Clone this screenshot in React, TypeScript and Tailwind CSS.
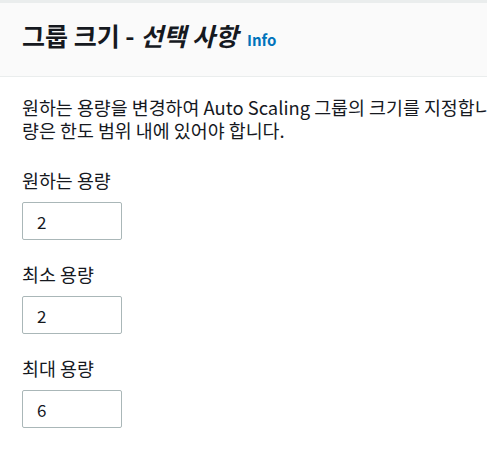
import React from 'react';

const font = { fontFamily: '"Noto Sans CJK KR", "Noto Sans", Arial, sans-serif' };

const Field: React.FC<{ label: string; value: string }> = ({ label, value }) => (
  <div className="flex flex-col">
    <label className="text-[18.4px] leading-[24px] text-[#16191f] mb-[10px]">{label}</label>
    <input
      readOnly
      value={value}
      className="w-[100px] h-[38px] border border-[#aab7b8] rounded-[2px] bg-white px-[14px] text-[17px] text-[#16191f] outline-none"
    />
  </div>
);

const App: React.FC = () => {
  return (
    <div className="w-[487px] h-[449px] bg-white overflow-hidden" style={font}>
      <div className="border-t-[3px] border-b border-[#eaeded] bg-[#fafafa] h-[77px] flex items-center px-[22px]">
        <h2 className="text-[25px] leading-[30px] font-bold text-[#16191f] whitespace-nowrap -mt-[4px]">
          그룹 크기 - <i>선택 사항</i>
          <a href="#" className="ml-[9px] text-[15px] font-bold text-[#0073bb]">Info</a>
        </h2>
      </div>
      <div className="px-[22px] pt-[19px]">
        <p className="text-[18.4px] leading-[23px] text-[#16191f] whitespace-nowrap">
          <span className="block">원하는 용량을 변경하여 Auto Scaling 그룹의 크기를 지정합니다. 원하는 용</span>
          <span className="block">량은 한도 범위 내에 있어야 합니다.</span>
        </p>
        <div className="mt-[26px] flex flex-col gap-[22px]">
          <Field label="원하는 용량" value="2" />
          <Field label="최소 용량" value="2" />
          <Field label="최대 용량" value="6" />
        </div>
      </div>
    </div>
  );
};

export default App;
